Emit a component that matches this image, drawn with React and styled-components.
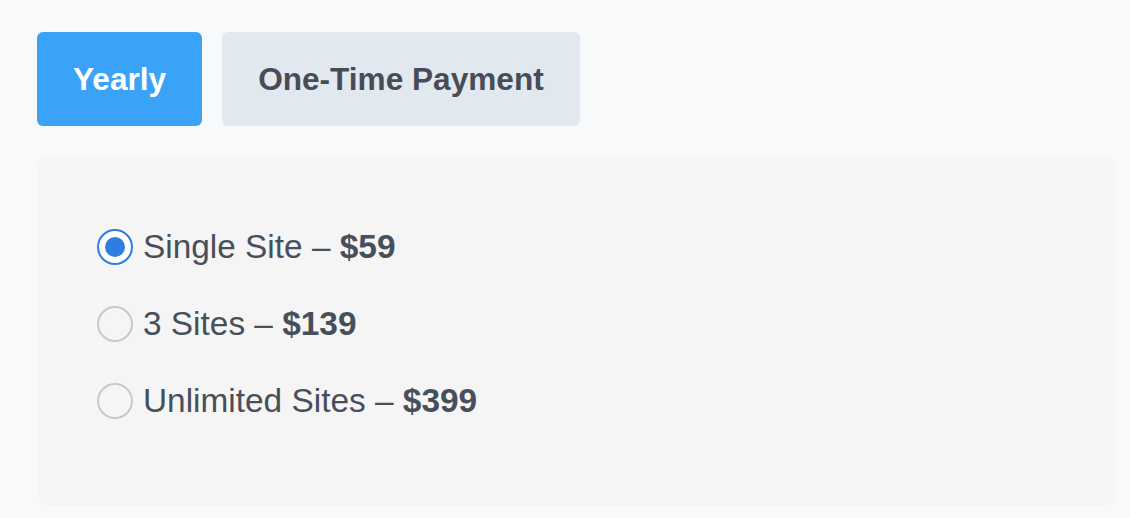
import React, { useState } from "react";
import styled, { createGlobalStyle } from "styled-components";

const GlobalStyle = createGlobalStyle`
  html, body {
    margin: 0;
    padding: 0;
    background: #f8f9fb;
    font-family: "Liberation Sans", Arial, Helvetica, sans-serif;
  }
`;

const Page = styled.div`
  padding: 32px 14px 12px 37px;
  display: flex;
  flex-direction: column;
  gap: 30px;
`;

const Tabs = styled.div`
  display: flex;
  gap: 20px;
`;

const Tab = styled.button`
  height: 94px;
  padding: 0 36px;
  border: none;
  border-radius: 6px;
  font-family: inherit;
  font-size: 31.6px;
  font-weight: 700;
  cursor: pointer;
  background: ${(p) => (p.$active ? "#3ba3f7" : "#e2e8f0")};
  color: ${(p) => (p.$active ? "#ffffff" : "#474d56")};
`;

const Panel = styled.div`
  background: #f5f5f5;
  border-radius: 14px;
  height: 350px;
  box-sizing: border-box;
  padding: 72px 60px;
  display: flex;
  flex-direction: column;
  gap: 40px;
`;

const Option = styled.label`
  display: flex;
  align-items: center;
  gap: 10px;
  height: 37px;
  font-size: 33.4px;
  color: #47505a;
  cursor: pointer;
`;

const Radio = styled.span`
  width: 36px;
  height: 36px;
  box-sizing: border-box;
  border-radius: 50%;
  background: ${(p) => (p.$checked ? "#ffffff" : "transparent")};
  border: 2px solid ${(p) => (p.$checked ? "#2f7de1" : "#c9c9c9")};
  display: flex;
  align-items: center;
  justify-content: center;
  flex-shrink: 0;

  &::after {
    content: "";
    width: 20px;
    height: 20px;
    border-radius: 50%;
    background: #2f7de1;
    display: ${(p) => (p.$checked ? "block" : "none")};
  }
`;

const Price = styled.b`
  font-weight: 700;
`;

const plans = {
  yearly: [
    { name: "Single Site", price: "$59" },
    { name: "3 Sites", price: "$139" },
    { name: "Unlimited Sites", price: "$399" },
  ],
  once: [
    { name: "Single Site", price: "$149" },
    { name: "3 Sites", price: "$349" },
    { name: "Unlimited Sites", price: "$999" },
  ],
};

export default function App() {
  const [mode, setMode] = useState("yearly");
  const [selected, setSelected] = useState(0);

  return (
    <>
      <GlobalStyle />
      <Page>
        <Tabs>
          <Tab $active={mode === "yearly"} onClick={() => setMode("yearly")}>
            Yearly
          </Tab>
          <Tab $active={mode === "once"} onClick={() => setMode("once")}>
            One-Time Payment
          </Tab>
        </Tabs>
        <Panel>
          {plans[mode].map((plan, i) => (
            <Option key={plan.name} onClick={() => setSelected(i)}>
              <Radio $checked={selected === i} />
              <span>
                {plan.name} – <Price>{plan.price}</Price>
              </span>
            </Option>
          ))}
        </Panel>
      </Page>
    </>
  );
}
